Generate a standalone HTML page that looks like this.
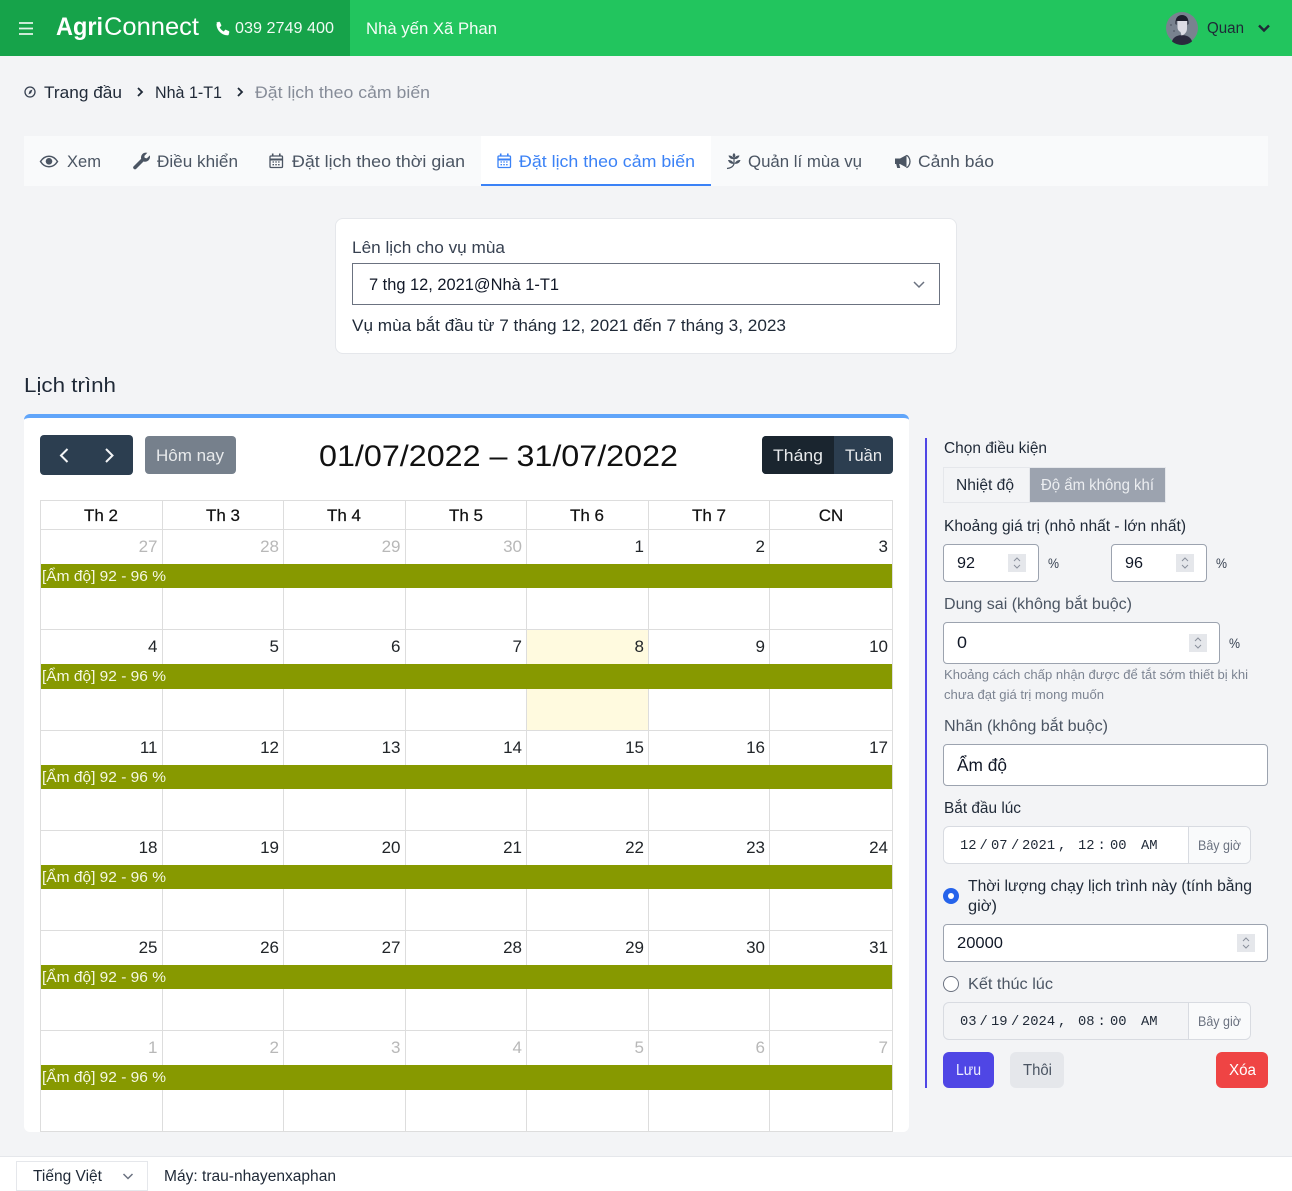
<!DOCTYPE html>
<html lang="vi">
<head>
<meta charset="utf-8">
<title>Đặt lịch theo cảm biến</title>
<style>
html,body{margin:0;padding:0;width:1292px;height:1191px;overflow:hidden;background:#f3f4f6;font-family:"Liberation Sans","Noto Sans CJK SC",sans-serif}
.b{position:absolute;box-sizing:border-box}
svg{position:absolute;left:0;top:0}
text{font-family:"Liberation Sans","Noto Sans CJK SC",sans-serif}
text.mono{font-family:"Liberation Mono",monospace;font-size:13.8px;fill:#1f2937}
.tab{font-size:16.5px;fill:#4b5563}
.lbl{font-size:15.5px;fill:#1f2937}
.lbl2{font-size:15.5px;fill:#4b5563}
.th{font-size:17px;fill:#111;stroke:#111;stroke-width:.2;text-anchor:middle}
.d{font-size:17px;fill:#212529;text-anchor:end}
.o{font-size:17px;fill:#b8b8b8;text-anchor:end}
.e{font-size:14.5px;fill:#f6f8e4}
.num{font-size:16px;fill:#111827}
.now{font-size:14px;fill:#6b7280}
</style>
</head>
<body>
<div class="b" style="left:0;top:0;width:1292px;height:56px;background:#22c55e"></div>
<div class="b" style="left:0;top:0;width:350px;height:56px;background:#16a34a"></div>

<div class="b" style="left:24px;top:136px;width:1244px;height:50px;background:#f9fafb"></div>
<div class="b" style="left:481px;top:136px;width:230px;height:50px;background:#fff;border-bottom:2px solid #3b82f6"></div>

<div class="b" style="left:335px;top:218px;width:622px;height:136px;background:#fff;border:1px solid #e5e7eb;border-radius:8px"></div>
<div class="b" style="left:352px;top:263px;width:588px;height:42px;background:#fff;border:1px solid #6b7280"></div>

<div class="b" style="left:24px;top:414px;width:885px;height:718px;background:#fff;border-top:4px solid #60a5fa;border-radius:6px"></div>
<div class="b" style="left:40px;top:435px;width:93px;height:40px;background:#2c3e50;border-radius:4px"></div>
<div class="b" style="left:145px;top:436px;width:91px;height:38px;background:#76808c;border-radius:4px"></div>
<div class="b" style="left:762px;top:436px;width:131px;height:38px;background:#2c3e50;border-radius:4px;overflow:hidden"><div style="width:72px;height:38px;background:#1a252f"></div></div>

<div class="b" style="left:527px;top:630px;width:121px;height:100px;background:#fffadf"></div>

<div class="b" style="left:41px;top:564px;width:851px;height:24px;background:#879900"></div>
<div class="b" style="left:41px;top:664px;width:851px;height:25px;background:#879900"></div>
<div class="b" style="left:41px;top:765px;width:851px;height:24px;background:#879900"></div>
<div class="b" style="left:41px;top:865px;width:851px;height:24px;background:#879900"></div>
<div class="b" style="left:41px;top:965px;width:851px;height:24px;background:#879900"></div>
<div class="b" style="left:41px;top:1065px;width:851px;height:25px;background:#879900"></div>

<div class="b" style="left:925px;top:438px;width:2px;height:650px;background:#4f46e5"></div>
<div class="b" style="left:943px;top:467px;width:87px;height:36px;background:#f3f4f6;border:1px solid #e5e7eb"></div>
<div class="b" style="left:1029px;top:467px;width:137px;height:36px;background:#9ca3af;border:1px solid #e5e7eb"></div>

<div class="b" style="left:943px;top:544px;width:96px;height:38px;background:#fff;border:1px solid #9ca3af;border-radius:4px"></div>
<div class="b" style="left:1111px;top:544px;width:96px;height:38px;background:#fff;border:1px solid #9ca3af;border-radius:4px"></div>
<div class="b" style="left:943px;top:622px;width:277px;height:42px;background:#fff;border:1px solid #9ca3af;border-radius:4px"></div>
<div class="b" style="left:943px;top:744px;width:325px;height:42px;background:#fff;border:1px solid #9ca3af;border-radius:4px"></div>
<div class="b" style="left:943px;top:826px;width:308px;height:38px;background:#fff;border:1px solid #d8dbe1;border-radius:6px;overflow:hidden"><div class="b" style="left:244px;top:0;width:63px;height:36px;background:#f9fafb;border-left:1px solid #d8dbe1"></div></div>
<div class="b" style="left:943px;top:924px;width:325px;height:38px;background:#fff;border:1px solid #9ca3af;border-radius:4px"></div>
<div class="b" style="left:943px;top:1002px;width:308px;height:38px;background:#f3f4f6;border:1px solid #d8dbe1;border-radius:6px;overflow:hidden"><div class="b" style="left:244px;top:0;width:63px;height:36px;background:#f9fafb;border-left:1px solid #d8dbe1"></div></div>

<div class="b" style="left:1008px;top:554px;width:18px;height:18px;background:#e5e7eb"></div>
<div class="b" style="left:1176px;top:554px;width:18px;height:18px;background:#e5e7eb"></div>
<div class="b" style="left:1189px;top:634px;width:18px;height:18px;background:#e5e7eb"></div>
<div class="b" style="left:1237px;top:934px;width:18px;height:18px;background:#e5e7eb"></div>

<div class="b" style="left:943px;top:1052px;width:51px;height:36px;background:#4f46e5;border-radius:6px"></div>
<div class="b" style="left:1010px;top:1052px;width:54px;height:36px;background:#e5e7eb;border-radius:6px"></div>
<div class="b" style="left:1216px;top:1052px;width:52px;height:36px;background:#ef4444;border-radius:6px"></div>

<div class="b" style="left:0;top:1156px;width:1292px;height:35px;background:#fff;border-top:1px solid #e5e7eb"></div>
<div class="b" style="left:16px;top:1161px;width:132px;height:30px;background:#fff;border:1px solid #e5e7eb"></div>

<svg width="1292" height="1191" viewBox="0 0 1292 1191" xmlns="http://www.w3.org/2000/svg">
<!-- calendar grid -->
<g stroke="#ddd" stroke-width="1" shape-rendering="crispEdges">
<path d="M40.5 500V1131M162.5 529V564M162.5 588V664M162.5 689V765M162.5 789V865M162.5 889V965M162.5 989V1065M162.5 1090V1131M162.5 500V529
M283.5 500V564M283.5 588V664M283.5 689V765M283.5 789V865M283.5 889V965M283.5 989V1065M283.5 1090V1131
M405.5 500V564M405.5 588V664M405.5 689V765M405.5 789V865M405.5 889V965M405.5 989V1065M405.5 1090V1131
M526.5 500V564M526.5 588V664M526.5 689V765M526.5 789V865M526.5 889V965M526.5 989V1065M526.5 1090V1131
M648.5 500V564M648.5 588V664M648.5 689V765M648.5 789V865M648.5 889V965M648.5 989V1065M648.5 1090V1131
M769.5 500V564M769.5 588V664M769.5 689V765M769.5 789V865M769.5 889V965M769.5 989V1065M769.5 1090V1131
M892.5 500V1131
M40 500.5H893M40 529.5H893M40 629.5H893M40 730.5H893M40 830.5H893M40 930.5H893M40 1030.5H893M40 1131.5H893" fill="none"/>
</g>

<!-- header -->
<path d="M19 23H33M19 28.5H33M19 34H33" stroke="#e3f5e9" stroke-width="1.8" fill="none"/>
<text x="56" y="35" font-size="25" font-weight="700" fill="#fff" textLength="47" lengthAdjust="spacingAndGlyphs">Agri</text>
<text x="104" y="35" font-size="25" fill="#fff" textLength="95" lengthAdjust="spacingAndGlyphs">Connect</text>
<path d="M216.5 22.5l2.6-.6c.4-.1.7.1.9.5l1.2 2.8c.1.3 0 .7-.2.9l-1.5 1.2c.9 1.9 2.4 3.4 4.3 4.3l1.2-1.5c.2-.3.6-.4.9-.2l2.8 1.2c.4.2.6.5.5.9l-.6 2.6c-.1.4-.4.6-.8.6-6.2 0-11.2-5-11.2-11.2 0-.3.3-.6.6-.7z" fill="#fff" stroke="#fff" stroke-width=".2"/>
<text x="235" y="33" font-size="15.5" fill="#f2fbf5" textLength="99" lengthAdjust="spacingAndGlyphs">039 2749 400</text>
<text x="366" y="34" font-size="16.5" fill="#f4fdf7" textLength="131" lengthAdjust="spacingAndGlyphs">Nhà yến Xã Phan</text>
<circle cx="1182" cy="28" r="16" fill="#79828f"/>
<path d="M1172 41.500c1-4 4-5.500 7.500-6.300h5c3.500.8 6.500 2.300 7.500 6.300a16 16 0 0 1-20 0z" fill="#2a2a3d"/>
<path d="M1175.500 24c-.5-6 2.500-9 6.500-9s7 3 6.500 9l-1 1V21h-11v4z" fill="#1d1f2c"/>
<path d="M1177.500 21h9.500v7.500c0 3-1.500 4.500-3 6l-2.500 1-1-3.500c-2-1-3-2.500-3-5z" fill="#dcdce4"/>
<circle cx="1171" cy="25" r="1" fill="#5b6370"/><circle cx="1174" cy="31" r="1" fill="#5b6370"/>
<text x="1207" y="33" font-size="15.5" fill="#1f2937" textLength="37" lengthAdjust="spacingAndGlyphs">Quan</text>
<path d="M1259 25.500l5 5 5-5" fill="none" stroke="#1f2937" stroke-width="2.400"/>

<!-- breadcrumb -->
<circle cx="30" cy="92" r="5" fill="none" stroke="#374151" stroke-width="1.300"/>
<path d="M32.500 89.500l-1.400 3.600-2.700 1.400 1.300-3.700z" fill="#374151"/>
<text x="44" y="98" font-size="17" fill="#1f2937" textLength="78" lengthAdjust="spacingAndGlyphs">Trang đầu</text>
<path d="M138 88l4 4-4 4" fill="none" stroke="#1f2937" stroke-width="1.800"/>
<text x="155" y="98" font-size="17" fill="#1f2937" textLength="67" lengthAdjust="spacingAndGlyphs">Nhà 1-T1</text>
<path d="M238 88l4 4-4 4" fill="none" stroke="#1f2937" stroke-width="1.800"/>
<text x="255" y="98" font-size="17" fill="#868c98" textLength="175" lengthAdjust="spacingAndGlyphs">Đặt lịch theo cảm biến</text>

<!-- tabs -->
<path d="M40.500 161.500c2.300-3.600 5.200-5.300 8.500-5.300s6.200 1.700 8.500 5.300c-2.300 3.600-5.200 5.300-8.500 5.300s-6.200-1.700-8.500-5.300z" fill="none" stroke="#4b5563" stroke-width="1.500"/>
<circle cx="49" cy="161.300" r="3.300" fill="#4b5563"/>
<text x="67" y="167" class="tab" textLength="34" lengthAdjust="spacingAndGlyphs">Xem</text>
<path d="M135 167.500l8-8" stroke="#4b5563" stroke-width="3.600" stroke-linecap="round" fill="none"/>
<path d="M141.500 158.500c-.6-3 1.700-5.700 5-5.400l-2.600 2.700.5 2.500 2.500.5 2.700-2.600c.3 3.300-2.500 5.700-5.500 5z" fill="#4b5563" stroke="#4b5563" stroke-width=".8"/>
<text x="157" y="167" class="tab" textLength="81" lengthAdjust="spacingAndGlyphs">Điều khiển</text>

<g fill="none" stroke="#4b5563"><rect x="270" y="156" width="12.500" height="11.500" rx="1" stroke-width="1.300"/><path d="M270 159.500h12.500" stroke-width="2"/><path d="M272.700 153.500v3M279.800 153.500v3" stroke-width="1.600"/><path d="M272.500 162h7.500M272.500 164.700h7.500" stroke-width="1.300" stroke-dasharray="1.500 1.300"/></g>
<text x="292" y="167" class="tab" textLength="173" lengthAdjust="spacingAndGlyphs">Đặt lịch theo thời gian</text>

<g fill="none" stroke="#3b82f6"><rect x="498" y="156" width="12.500" height="11.500" rx="1" stroke-width="1.300"/><path d="M498 159.500h12.500" stroke-width="2"/><path d="M500.700 153.500v3M507.800 153.500v3" stroke-width="1.600"/><path d="M500.500 162h7.500M500.500 164.700h7.500" stroke-width="1.300" stroke-dasharray="1.500 1.300"/></g>
<text x="519" y="167" font-size="16.5" fill="#3b82f6" textLength="176" lengthAdjust="spacingAndGlyphs">Đặt lịch theo cảm biến</text>

<g fill="#4b5563">
<path d="M727 168.500c3.500-.3 6-1.500 7-4.500v-8" fill="none" stroke="#4b5563" stroke-width="1.200"/>
<path d="M734 153c1.800 1.500 1.800 3.500 0 5-1.800-1.500-1.800-3.500 0-5z"/>
<path d="M728.500 155.500c2.500-.2 4.500.8 5.500 3.500-2.800.4-4.800-.8-5.500-3.500zM739.500 155.500c-2.500-.2-4.500.8-5.500 3.500 2.800.4 4.800-.8 5.500-3.500z"/>
<path d="M728 160c2.600-.2 4.800 1 6 3.800-3 .4-5.200-1-6-3.800zM740.500 160c-2.600-.2-4.800 1-6 3.800 3 .4 5.200-1 6-3.800z"/>
</g>
<text x="748" y="167" class="tab" textLength="114" lengthAdjust="spacingAndGlyphs">Quản lí mùa vụ</text>
<path d="M895 158.500h5l6.500-3.500v12.500l-6.500-3.500h-.8l1 4h-3l-1-4H895z" fill="#4b5563"/>
<path d="M906.500 155.500c1.200 0 3.500 2.500 3.500 6s-2.300 6-3.500 6" fill="none" stroke="#4b5563" stroke-width="1.300"/>
<text x="918" y="167" class="tab" textLength="76" lengthAdjust="spacingAndGlyphs">Cảnh báo</text>

<!-- season card -->
<text x="352" y="253" font-size="16.5" fill="#374151" textLength="153" lengthAdjust="spacingAndGlyphs">Lên lịch cho vụ mùa</text>
<text x="369" y="290" font-size="16.5" fill="#111827" textLength="190" lengthAdjust="spacingAndGlyphs">7 thg 12, 2021@Nhà 1-T1</text>
<path d="M914 282l5 5 5-5" fill="none" stroke="#6b7280" stroke-width="1.500"/>
<text x="352" y="331" font-size="16.5" fill="#1f2937" textLength="434" lengthAdjust="spacingAndGlyphs">Vụ mùa bắt đầu từ 7 tháng 12, 2021 đến 7 tháng 3, 2023</text>
<text x="24" y="392" font-size="20.5" fill="#1f2937" textLength="92" lengthAdjust="spacingAndGlyphs">Lịch trình</text>

<!-- calendar toolbar -->
<path d="M67.500 449l-6.500 6.500 6.500 6.500M106 449l6.500 6.500-6.500 6.500" fill="none" stroke="#f3f4f6" stroke-width="2"/>
<text x="156" y="461" font-size="16.5" fill="#e8eaec" textLength="68" lengthAdjust="spacingAndGlyphs">Hôm nay</text>
<text x="319" y="466" font-size="30" fill="#111" textLength="359" lengthAdjust="spacingAndGlyphs">01/07/2022 – 31/07/2022</text>
<text x="773" y="461" font-size="16.5" fill="#e8eaec" textLength="50" lengthAdjust="spacingAndGlyphs">Tháng</text>
<text x="845" y="461" font-size="16.5" fill="#e8eaec" textLength="37" lengthAdjust="spacingAndGlyphs">Tuần</text>

<!-- calendar head -->
<text x="101" y="521" class="th">Th 2</text><text x="223" y="521" class="th">Th 3</text><text x="344" y="521" class="th">Th 4</text><text x="466" y="521" class="th">Th 5</text><text x="587" y="521" class="th">Th 6</text><text x="709" y="521" class="th">Th 7</text><text x="831" y="521" class="th">CN</text>

<!-- days -->
<text x="157.500" y="552" class="o">27</text><text x="279" y="552" class="o">28</text><text x="400.500" y="552" class="o">29</text><text x="522" y="552" class="o">30</text><text x="644" y="552" class="d">1</text><text x="765" y="552" class="d">2</text><text x="888" y="552" class="d">3</text>
<text x="157.500" y="652" class="d">4</text><text x="279" y="652" class="d">5</text><text x="400.500" y="652" class="d">6</text><text x="522" y="652" class="d">7</text><text x="644" y="652" class="d">8</text><text x="765" y="652" class="d">9</text><text x="888" y="652" class="d">10</text>
<text x="157.500" y="753" class="d">11</text><text x="279" y="753" class="d">12</text><text x="400.500" y="753" class="d">13</text><text x="522" y="753" class="d">14</text><text x="644" y="753" class="d">15</text><text x="765" y="753" class="d">16</text><text x="888" y="753" class="d">17</text>
<text x="157.500" y="853" class="d">18</text><text x="279" y="853" class="d">19</text><text x="400.500" y="853" class="d">20</text><text x="522" y="853" class="d">21</text><text x="644" y="853" class="d">22</text><text x="765" y="853" class="d">23</text><text x="888" y="853" class="d">24</text>
<text x="157.500" y="953" class="d">25</text><text x="279" y="953" class="d">26</text><text x="400.500" y="953" class="d">27</text><text x="522" y="953" class="d">28</text><text x="644" y="953" class="d">29</text><text x="765" y="953" class="d">30</text><text x="888" y="953" class="d">31</text>
<text x="157.500" y="1053" class="o">1</text><text x="279" y="1053" class="o">2</text><text x="400.500" y="1053" class="o">3</text><text x="522" y="1053" class="o">4</text><text x="644" y="1053" class="o">5</text><text x="765" y="1053" class="o">6</text><text x="888" y="1053" class="o">7</text>

<!-- events -->
<text x="42" y="581" class="e" textLength="124" lengthAdjust="spacingAndGlyphs">[Ẩm độ] 92 - 96 %</text>
<text x="42" y="681" class="e" textLength="124" lengthAdjust="spacingAndGlyphs">[Ẩm độ] 92 - 96 %</text>
<text x="42" y="782" class="e" textLength="124" lengthAdjust="spacingAndGlyphs">[Ẩm độ] 92 - 96 %</text>
<text x="42" y="882" class="e" textLength="124" lengthAdjust="spacingAndGlyphs">[Ẩm độ] 92 - 96 %</text>
<text x="42" y="982" class="e" textLength="124" lengthAdjust="spacingAndGlyphs">[Ẩm độ] 92 - 96 %</text>
<text x="42" y="1082" class="e" textLength="124" lengthAdjust="spacingAndGlyphs">[Ẩm độ] 92 - 96 %</text>

<!-- side form -->
<text x="944" y="453" class="lbl" textLength="103" lengthAdjust="spacingAndGlyphs">Chọn điều kiện</text>
<text x="956" y="490" font-size="15.5" fill="#1f2937" textLength="58" lengthAdjust="spacingAndGlyphs">Nhiệt độ</text>
<text x="1041" y="490" font-size="15.5" fill="#eceef1" textLength="113" lengthAdjust="spacingAndGlyphs">Độ ẩm không khí</text>
<text x="944" y="531" class="lbl" textLength="242" lengthAdjust="spacingAndGlyphs">Khoảng giá trị (nhỏ nhất - lớn nhất)</text>
<text x="957" y="568" class="num" textLength="18" lengthAdjust="spacingAndGlyphs">92</text>
<text x="1125" y="568" class="num" textLength="18" lengthAdjust="spacingAndGlyphs">96</text>
<text x="1048" y="568" font-size="14" fill="#374151" textLength="11" lengthAdjust="spacingAndGlyphs">%</text>
<text x="1216" y="568" font-size="14" fill="#374151" textLength="11" lengthAdjust="spacingAndGlyphs">%</text>
<text x="944" y="609" class="lbl2" textLength="188" lengthAdjust="spacingAndGlyphs">Dung sai (không bắt buộc)</text>
<text x="957" y="648" font-size="17" fill="#111827" textLength="10" lengthAdjust="spacingAndGlyphs">0</text>
<text x="1229" y="648" font-size="14" fill="#374151" textLength="11" lengthAdjust="spacingAndGlyphs">%</text>
<text x="944" y="679" font-size="13" fill="#7c8492" textLength="304" lengthAdjust="spacingAndGlyphs">Khoảng cách chấp nhận được để tắt sớm thiết bị khi</text>
<text x="944" y="699" font-size="13" fill="#7c8492" textLength="160" lengthAdjust="spacingAndGlyphs">chưa đạt giá trị mong muốn</text>
<text x="944" y="731" class="lbl2" textLength="164" lengthAdjust="spacingAndGlyphs">Nhãn (không bắt buộc)</text>
<text x="957" y="771" font-size="17.5" fill="#111827" textLength="50" lengthAdjust="spacingAndGlyphs">Ẩm độ</text>
<text x="944" y="813" class="lbl" textLength="77" lengthAdjust="spacingAndGlyphs">Bắt đầu lúc</text>

<text x="960" y="849" class="mono">12</text><text x="979.500" y="849" class="mono">/</text><text x="991" y="849" class="mono">07</text><text x="1011" y="849" class="mono">/</text><text x="1022" y="849" class="mono">2021</text><text x="1058" y="849" class="mono">,</text><text x="1078" y="849" class="mono">12</text><text x="1097.500" y="849" class="mono">:</text><text x="1110" y="849" class="mono">00</text><text x="1141" y="849" class="mono">AM</text>
<text x="960" y="1025" class="mono">03</text><text x="979.500" y="1025" class="mono">/</text><text x="991" y="1025" class="mono">19</text><text x="1011" y="1025" class="mono">/</text><text x="1022" y="1025" class="mono">2024</text><text x="1058" y="1025" class="mono">,</text><text x="1078" y="1025" class="mono">08</text><text x="1097.500" y="1025" class="mono">:</text><text x="1110" y="1025" class="mono">00</text><text x="1141" y="1025" class="mono">AM</text>
<text x="1198" y="850" class="now" textLength="43" lengthAdjust="spacingAndGlyphs">Bây giờ</text>
<text x="1198" y="1026" class="now" textLength="43" lengthAdjust="spacingAndGlyphs">Bây giờ</text>

<circle cx="951" cy="896" r="8" fill="#2563eb"/><circle cx="951" cy="896" r="3" fill="#fff"/>
<text x="968" y="891" class="lbl" textLength="284" lengthAdjust="spacingAndGlyphs">Thời lượng chạy lịch trình này (tính bằng</text>
<text x="968" y="911" class="lbl" textLength="29" lengthAdjust="spacingAndGlyphs">giờ)</text>
<text x="957" y="948" class="num" textLength="46" lengthAdjust="spacingAndGlyphs">20000</text>
<circle cx="951" cy="984" r="7.500" fill="#fff" stroke="#6b7280" stroke-width="1"/>
<text x="968" y="989" class="lbl2" textLength="85" lengthAdjust="spacingAndGlyphs">Kết thúc lúc</text>

<g fill="none" stroke="#8a909c" stroke-width="1">
<path d="M1014 561l3-3 3 3M1014 565l3 3 3-3"/>
<path d="M1182 561l3-3 3 3M1182 565l3 3 3-3"/>
<path d="M1195 641l3-3 3 3M1195 645l3 3 3-3"/>
<path d="M1243 941l3-3 3 3M1243 945l3 3 3-3"/>
</g>

<text x="956" y="1075" font-size="15.5" fill="#eef0ff" textLength="25" lengthAdjust="spacingAndGlyphs">Lưu</text>
<text x="1023" y="1075" font-size="15.5" fill="#4b5563" textLength="29" lengthAdjust="spacingAndGlyphs">Thôi</text>
<text x="1229" y="1075" font-size="15.5" fill="#fff" textLength="27" lengthAdjust="spacingAndGlyphs">Xóa</text>

<!-- footer -->
<text x="33" y="1181" font-size="15.5" fill="#1f2937" textLength="69" lengthAdjust="spacingAndGlyphs">Tiếng Việt</text>
<path d="M123.500 1174l4.500 4.500 4.500-4.500" fill="none" stroke="#6b7280" stroke-width="1.500"/>
<text x="164" y="1181" font-size="15.5" fill="#1f2937" textLength="172" lengthAdjust="spacingAndGlyphs">Máy: trau-nhayenxaphan</text>
</svg>
</body>
</html>
